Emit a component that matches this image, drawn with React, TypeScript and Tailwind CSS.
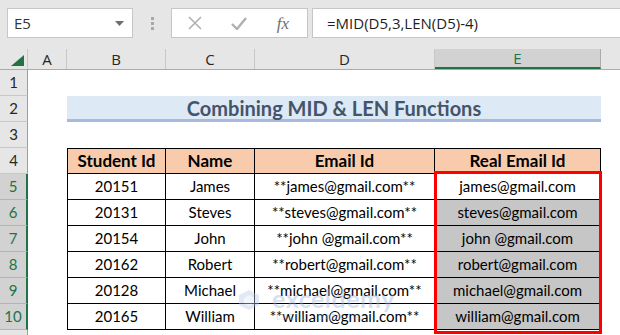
import React from "react";

const data = [
  ["20151", "James", "**james@gmail.com**", "james@gmail.com"],
  ["20131", "Steves", "**steves@gmail.com**", "steves@gmail.com"],
  ["20154", "John", "**john @gmail.com**", "john @gmail.com"],
  ["20162", "Robert", "**robert@gmail.com**", "robert@gmail.com"],
  ["20128", "Michael", "**michael@gmail.com**", "michael@gmail.com"],
  ["20165", "William", "**william@gmail.com**", "william@gmail.com"],
];

const colHead =
  "h-full flex items-center justify-center border-r border-[#c8c8c8] text-[15px] text-[#262626]";
const cell =
  "h-full flex items-center justify-center border-r border-b border-black text-[15px] text-black";

function RowHead({ n, sel }: { n: number; sel?: boolean }) {
  return (
    <div
      className={
        sel
          ? "w-[28px] h-full shrink-0 flex items-center justify-center bg-[#d2d2d2] border-b border-[#b4b4b4] border-r-2 border-r-[#217346] text-[15px] text-[#217346]"
          : "w-[28px] h-full shrink-0 flex items-center justify-center bg-[#e6e6e6] border-b border-[#c8c8c8] border-r border-r-[#9e9e9e] text-[15px] text-[#262626]"
      }
    >
      {n}
    </div>
  );
}

export default function App() {
  return (
    <div className="w-[620px] h-[335px] overflow-hidden bg-white font-['Open_Sans',sans-serif] relative">
      {/* formula bar */}
      <div className="h-[49px] bg-[#e6e6e6] flex items-start pt-[8px] pl-[7px]">
        <div className="w-[126px] h-[30px] bg-white border border-[#c6c6c6] flex items-center justify-between pl-[6px] pr-[8px]">
          <span className="text-[15px] text-[#333]">E5</span>
          <svg width="9" height="5" viewBox="0 0 9 5">
            <path d="M0 0h9L4.5 5z" fill="#6e6e6e" />
          </svg>
        </div>
        <div className="w-[38px] h-[30px] flex flex-col items-center justify-center gap-[2px]">
          <div className="w-[3px] h-[3px] bg-[#a8a8a8]" />
          <div className="w-[3px] h-[3px] bg-[#a8a8a8]" />
          <div className="w-[3px] h-[3px] bg-[#a8a8a8]" />
        </div>
        <div className="w-[137px] h-[30px] bg-white border border-[#c6c6c6] flex items-center">
          <div className="w-[44px] flex justify-center ml-[1px]">
            <svg width="14" height="14" viewBox="0 0 14 14">
              <path d="M1 1L13 13M13 1L1 13" stroke="#b0b0b0" strokeWidth="1.6" />
            </svg>
          </div>
          <div className="w-[44px] flex justify-center">
            <svg width="16" height="13" viewBox="0 0 16 13">
              <path d="M1 7L6 12L15 1" stroke="#b0b0b0" strokeWidth="2.4" fill="none" />
            </svg>
          </div>
          <div className="w-[44px] flex justify-center">
            <span className="font-['Liberation_Serif',serif] italic text-[17px] text-[#6e6e6e] leading-none">
              fx
            </span>
          </div>
        </div>
        <div className="flex-1 h-[30px] ml-[4px] bg-white border border-r-0 border-[#c6c6c6] flex items-center pl-[14px] text-[15px] text-[#1f1f1f]">
          =MID(D5,3,LEN(D5)-4)
        </div>
      </div>

      {/* column headers */}
      <div className="h-[21px] bg-[#e6e6e6] flex border-b border-[#ababab]">
        <div className="w-[28px] h-full border-r border-[#c8c8c8] flex items-end justify-end pr-[3px] pb-[3px]">
          <svg width="13" height="11" viewBox="0 0 13 11">
            <path d="M13 0V11H0z" fill="#217346" />
          </svg>
        </div>
        <div className={colHead + " w-[39px]"}>A</div>
        <div className={colHead + " w-[99px]"}>B</div>
        <div className={colHead + " w-[89px]"}>C</div>
        <div className={colHead + " w-[180px]"}>D</div>
        <div className="w-[166px] h-full flex items-center justify-center bg-[#d2d2d2] border-b-2 border-[#217346] border-r border-r-[#ababab] text-[15px] text-[#217346]">
          E
        </div>
        <div className="flex-1" />
      </div>

      {/* sheet */}
      <div className="relative font-['Lato',sans-serif]">
        <div className="h-[26px] flex">
          <RowHead n={1} />
        </div>
        <div className="h-[26px] flex">
          <RowHead n={2} />
          <div className="w-[39px]" />
          <div className="w-[534px] h-full bg-[#dde9f5] border-b-[3px] border-[#a7badd] flex items-center justify-center text-[20px] font-bold text-[#44546a]">
            Combining MID &amp; LEN Functions
          </div>
        </div>
        <div className="h-[26px] flex">
          <RowHead n={3} />
        </div>
        <div className="h-[26px] flex">
          <RowHead n={4} />
          <div className="w-[39px]" />
          <div className={cell + " w-[99px] border-l border-t bg-[#f8cbad] font-bold text-[17px]"}>Student Id</div>
          <div className={cell + " w-[89px] border-t bg-[#f8cbad] font-bold text-[17px]"}>Name</div>
          <div className={cell + " w-[180px] border-t bg-[#f8cbad] font-bold text-[17px]"}>Email Id</div>
          <div className={cell + " w-[166px] border-t bg-[#f8cbad] font-bold text-[17px]"}>Real Email Id</div>
        </div>
        {data.map((r, i) => (
          <div key={r[0]} className="h-[26px] flex">
            <RowHead n={i + 5} sel />
            <div className="w-[39px]" />
            <div className={cell + " w-[99px] border-l"}>{r[0]}</div>
            <div className={cell + " w-[89px]"}>{r[1]}</div>
            <div className={cell + " w-[180px]"}>{r[2]}</div>
            <div className={cell + (i === 0 ? " w-[166px] bg-white" : " w-[166px] bg-[#c6c6c6]")}>{r[3]}</div>
          </div>
        ))}
        <div className="h-[10px] flex">
          <div className="w-[28px] h-full bg-[#e6e6e6] border-r border-[#9e9e9e]" />
        </div>

        {/* selection border */}
        <div className="absolute left-[434px] top-[101px] w-[168px] h-[163px] border-[3px] border-[#ff0000] pointer-events-none" />

        {/* watermark */}
        <div className="absolute left-[238px] top-[216px] flex items-start gap-[12px] opacity-40 pointer-events-none">
          <svg width="22" height="22" viewBox="0 0 22 22" className="mt-[3px]">
            <path d="M11 1L21 6V16L11 21L1 16V6z" fill="#b9c9e8" />
            <path d="M11 6L16 9V14L11 17L6 14V9z" fill="#dfe7f5" />
          </svg>
          <div className="flex flex-col leading-none">
            <span className="text-[25px] font-bold text-[#9db3dd] tracking-[0.5px]">exceldemy</span>
            <span className="text-[8px] text-[#9db3dd] tracking-[1.5px] mt-[2px] ml-[4px]">EXCEL · DATA · BI</span>
          </div>
        </div>
      </div>
    </div>
  );
}
